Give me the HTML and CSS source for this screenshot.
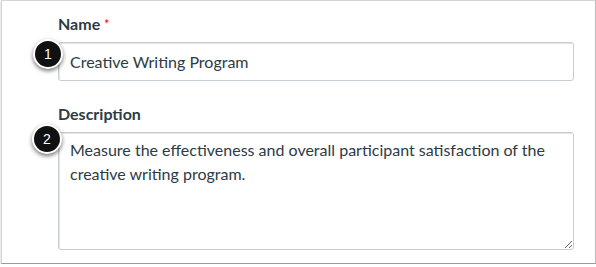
FILE: index.html
```html
<!DOCTYPE html>
<html>
<head>
<meta charset="utf-8">
<link rel="stylesheet" href="styles.css">
</head>
<body>
<div class="card">
  <div class="field">
    <label class="label">Name <span class="req">*</span></label>
    <div class="control">
      <input class="input" type="text" value="Creative Writing Program">
      <span class="badge badge-1">1</span>
    </div>
  </div>
  <div class="field field-desc">
    <label class="label">Description</label>
    <div class="control">
      <textarea class="textarea">Measure the effectiveness and overall participant satisfaction of the creative writing program.</textarea>
      <span class="badge badge-2">2</span>
    </div>
  </div>
</div>
</body>
</html>
```
FILE: styles.css
```css
html, body {
  margin: 0;
  padding: 0;
  background: #ffffff;
}
body {
  font-family: "Lato", "Liberation Sans", sans-serif;
  color: #2d3b45;
}
.card {
  box-sizing: border-box;
  width: 595px;
  height: 264px;
  margin-left: 1px;
  border: 1px solid #d4d4d4;
  border-bottom-color: #9a9a9a;
  border-right-color: #bdbdbd;
  box-shadow: 0 1px 2px rgba(0,0,0,0.25);
  padding: 13px 0 0 56px;
  background: #fff;
}
.field {
  display: flex;
  flex-direction: column;
}
.field-desc {
  margin-top: 23px;
}
.label {
  font-size: 16px;
  font-weight: 700;
  line-height: 20px;
  color: #2d3b45;
  margin-bottom: 8px;
}
.req {
  color: #e0061f;
  font-size: 13px;
  vertical-align: top;
  font-weight: 400;
}
.control {
  position: relative;
  width: 516px;
}
.input, .textarea {
  box-sizing: border-box;
  width: 516px;
  margin: 0;
  border: 1px solid #c7cdd1;
  border-radius: 3px;
  box-shadow: inset 1px 1px 0 #e3e6e8;
  font-family: "Lato", "Liberation Sans", sans-serif;
  font-size: 16px;
  color: #2d3b45;
  background: #fff;
  outline: none;
  display: block;
}
.input {
  height: 39px;
  padding: 0 11px;
}
.textarea {
  height: 118px;
  padding: 5px 11px;
  line-height: 24px;
  resize: both;
}
.badge {
  position: absolute;
  box-sizing: border-box;
  width: 30px;
  height: 30px;
  border-radius: 50%;
  background: #111;
  border: 2px solid #fff;
  box-shadow: 0 2px 4px rgba(0,0,0,0.55);
  color: #fff;
  font-family: "Liberation Sans", Arial, sans-serif;
  font-size: 14px;
  line-height: 26px;
  text-align: center;
}
.badge-1 {
  left: -25px;
  top: -3px;
}
.badge-2 {
  left: -26px;
  top: -8px;
}
```
